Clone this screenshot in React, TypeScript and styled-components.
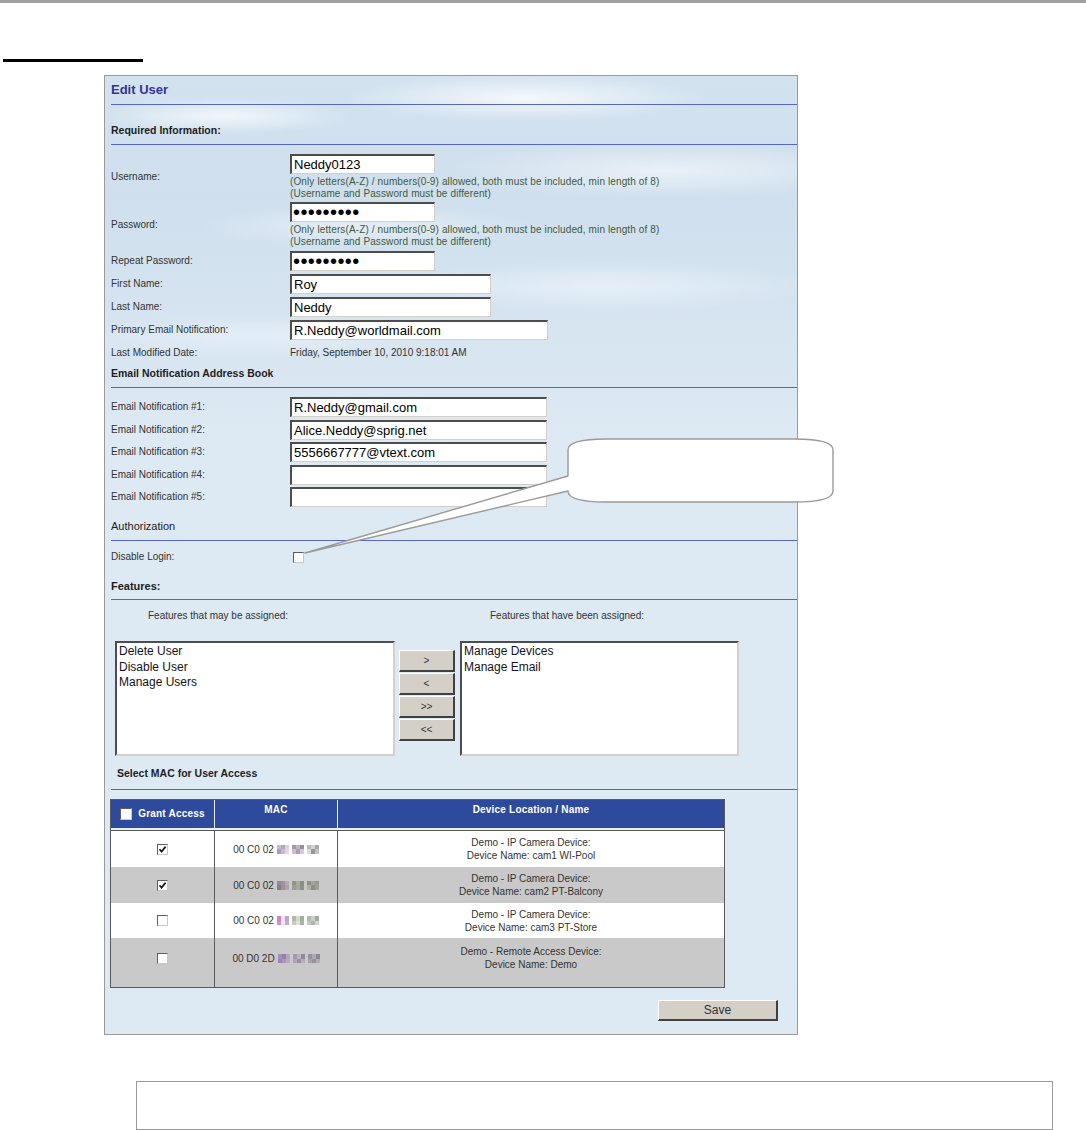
import styled, { createGlobalStyle } from "styled-components";

const GlobalStyle = createGlobalStyle`
  body {
    margin: 0;
    background: #fff;
    font-family: "Liberation Sans", Arial, sans-serif;
  }
`;

const macRows = [
  {
    checked: true,
    prefix: "00 C0 02",
    blur: [
      ["#c9b7cf", "#b3abbd", "#ddd1e0", "#a99fb3", "#c6bccd", "#e2d7e4"],
      ["#a598ab", "#c2b2c3", "#958da0", "#cbbfcd", "#ab9fb0", "#d6cad8"],
      ["#b8c0b5", "#d2d4d0", "#a5aca4", "#dcdadd", "#959a94", "#c4c2c6"],
    ],
    line1: "Demo - IP Camera Device:",
    line2: "Device Name: cam1 WI-Pool",
    bg: "#fff",
    h: 36,
  },
  {
    checked: true,
    prefix: "00 C0 02",
    blur: [
      ["#8f8a90", "#a98ca6", "#b6aab3", "#878083", "#9b9399", "#ada4aa"],
      ["#8c977f", "#a6aa9f", "#86907c", "#98a090", "#a8a6a3", "#8a9485"],
      ["#89937f", "#a4a3a0", "#959a8f", "#b2acae", "#899085", "#a09f9b"],
    ],
    line1: "Demo - IP Camera Device:",
    line2: "Device Name: cam2 PT-Balcony",
    bg: "#c9c9c9",
    h: 36,
  },
  {
    checked: false,
    prefix: "00 C0 02",
    blur: [
      ["#d282cc", "#ebe5eb", "#bda6cf", "#d690d2", "#efe9ef", "#c0aad2"],
      ["#b2bba8", "#d3dacb", "#a4ae9c", "#c5cdbd", "#dde1d8", "#aab4a3"],
      ["#b0b9b0", "#cdd0ce", "#a1aa9f", "#c5c8c5", "#aeb3ad", "#d4d6d4"],
    ],
    line1: "Demo - IP Camera Device:",
    line2: "Device Name: cam3 PT-Store",
    bg: "#fff",
    h: 35,
  },
  {
    checked: false,
    prefix: "00 D0 2D",
    blur: [
      ["#a98ebb", "#9580a8", "#b6a4c0", "#9b85ad", "#aa97b6", "#bcaac3"],
      ["#a09ca9", "#bab2bd", "#8d8b95", "#aea7b1", "#97949d", "#b6afb8"],
      ["#98949f", "#b0a9b4", "#8a8794", "#a6a0ae", "#96919e", "#b2abb6"],
    ],
    line1: "Demo - Remote Access Device:",
    line2: "Device Name: Demo",
    bg: "#c9c9c9",
    h: 49,
  },
];

const Page = styled.div`
  position: relative;
  width: 1086px;
  height: 1130px;
  overflow: hidden;
`;

const TopRule = styled.div`
  height: 3px;
  background: #a0a0a0;
`;

const HeadingRule = styled.div`
  margin: 56px 0 0 3px;
  width: 140px;
  height: 3px;
  background: #000;
`;

const Panel = styled.div`
  box-sizing: border-box;
  margin: 13px 0 0 104px;
  width: 694px;
  height: 960px;
  border: 1px solid #9a9a9a;
  padding: 0 0 0 6px;
  color: #333;
  background:
    radial-gradient(ellipse 260px 34px at 420px 22px, rgba(255, 255, 255, 0.75), rgba(255, 255, 255, 0) 70%),
    radial-gradient(ellipse 180px 26px at 120px 40px, rgba(255, 255, 255, 0.7), rgba(255, 255, 255, 0) 70%),
    radial-gradient(ellipse 320px 40px at 560px 95px, rgba(255, 255, 255, 0.55), rgba(255, 255, 255, 0) 70%),
    radial-gradient(ellipse 240px 30px at 260px 150px, rgba(255, 255, 255, 0.45), rgba(255, 255, 255, 0) 70%),
    radial-gradient(ellipse 300px 36px at 500px 210px, rgba(255, 255, 255, 0.45), rgba(255, 255, 255, 0) 70%),
    radial-gradient(ellipse 260px 30px at 150px 260px, rgba(255, 255, 255, 0.35), rgba(255, 255, 255, 0) 70%),
    linear-gradient(180deg, #d2e2ef 0px, #cfdfed 120px, #d7e5f1 260px, #dde9f3 360px, #dde9f3 100%);
`;

const PanelTitle = styled.div`
  padding: 7px 0 8px;
  line-height: 13px;
  font-size: 13px;
  font-weight: bold;
  color: #333399;
  border-bottom: 1px solid #5566c4;
`;

const SectionHead = styled.div<{ $top: number; $bottom?: number; $size?: number; $bold?: boolean; $indent?: number }>`
  margin-top: ${(p) => p.$top}px;
  padding: 0 0 ${(p) => p.$bottom ?? 8}px ${(p) => p.$indent ?? 0}px;
  line-height: 12px;
  font-size: ${(p) => p.$size ?? 10.5}px;
  font-weight: ${(p) => (p.$bold === false ? "normal" : "bold")};
  color: #1e1e1e;
  border-bottom: 1px solid #5566c4;
`;

const FieldList = styled.div<{ $top: number }>`
  margin-top: ${(p) => p.$top}px;
`;

const FieldRow = styled.div<{ $h?: number }>`
  display: grid;
  grid-template-columns: 179px 1fr;
  align-items: center;
  box-sizing: border-box;
  min-height: ${(p) => (p.$h ? `${p.$h}px` : "auto")};
  padding: ${(p) => (p.$h ? "0" : "1px 0")};
`;

const Label = styled.div`
  font-size: 10px;
  line-height: 12px;
  color: #333;
`;

const FieldCell = styled.div`
  display: flex;
  flex-direction: column;
  align-items: flex-start;
`;

const TextBox = styled.input<{ $w: number }>`
  box-sizing: border-box;
  width: ${(p) => p.$w}px;
  height: 20px;
  margin: 0;
  padding: 0 2px;
  border-style: solid;
  border-width: 2px 1px 1px 2px;
  border-color: #4d4d4d #d4d0c8 #d4d0c8 #4d4d4d;
  background: #fff;
  font-family: "Liberation Sans", Arial, sans-serif;
  font-size: 13px;
  color: #000;
  outline: none;
`;

const PasswordBox = styled(TextBox)`
  font-size: 20px;
  letter-spacing: 0.4px;
  padding-left: 1px;
`;

const Hint = styled.div`
  margin-top: 2px;
  font-size: 10px;
  line-height: 12px;
  letter-spacing: 0.12px;
  color: #3f5a3f;
`;

const HintLine = styled.div``;

const Value = styled.div`
  font-size: 10px;
  color: #333;
`;

const Box = styled.span<{ $size?: number; $inset?: number }>`
  display: inline-flex;
  align-items: center;
  justify-content: center;
  box-sizing: border-box;
  width: ${(p) => p.$size ?? 11}px;
  height: ${(p) => p.$size ?? 11}px;
  margin-left: ${(p) => p.$inset ?? 0}px;
  background: #fff;
  border-style: solid;
  border-width: 1px;
  border-color: #5e5e5e #c8c8c8 #c8c8c8 #5e5e5e;
  flex: none;
`;

const CheckBox = ({ checked, size, inset }: { checked?: boolean; size?: number; inset?: number }) => (
  <Box $size={size} $inset={inset}>
    {checked && (
      <svg width="9" height="9" viewBox="0 0 9 9">
        <path d="M1.5 4.2 L3.6 6.6 L7.6 1.6" fill="none" stroke="#1a1a1a" strokeWidth="1.7" />
      </svg>
    )}
  </Box>
);

const FeatureGrid = styled.div`
  display: grid;
  grid-template-columns: 280px 56px 280px;
  column-gap: 4px;
  margin-top: 10px;
  padding-left: 4px;
  & > :nth-child(3n) {
    margin-left: 1px;
  }
`;

const SubHead = styled.div<{ $pad: number }>`
  padding-left: ${(p) => p.$pad}px;
  font-size: 10px;
  line-height: 12px;
  color: #333;
`;

const Spacer = styled.div``;

const ListBox = styled.div`
  box-sizing: border-box;
  margin-top: 19px;
  height: 115px;
  padding: 1px 2px;
  background: #fff;
  border-style: solid;
  border-width: 2px 2px 2px 2px;
  border-color: #4d4d4d #d4d0c8 #d4d0c8 #4d4d4d;
`;

const ListItem = styled.div`
  font-size: 12px;
  line-height: 15.5px;
  color: #151020;
`;

const MoveButtons = styled.div`
  display: flex;
  flex-direction: column;
  gap: 1px;
  margin-top: 28px;
`;

const ClassicButton = styled.button<{ $w?: number; $h?: number; $size?: number }>`
  box-sizing: border-box;
  width: ${(p) => (p.$w ? `${p.$w}px` : "100%")};
  height: ${(p) => p.$h ?? 22}px;
  margin: 0;
  padding: 0;
  background: #d4d0c8;
  border-style: solid;
  border-width: 1px 2px 2px 1px;
  border-color: #ffffff #404040 #404040 #ffffff;
  font-family: "Liberation Sans", Arial, sans-serif;
  font-size: ${(p) => p.$size ?? 10}px;
  color: #333;
  cursor: pointer;
`;

const DeviceTable = styled.div`
  box-sizing: border-box;
  width: 615px;
  margin: 9px 0 0 -1px;
  border: 1px solid #5a5a5a;
`;

const HeaderRow = styled.div`
  display: grid;
  grid-template-columns: 104px 123px 1fr;
  border-bottom: 2px solid #e6eef5;
`;

const HeadCell = styled.div<{ $center?: boolean }>`
  box-sizing: border-box;
  height: 28px;
  display: flex;
  justify-content: center;
  align-items: ${(p) => (p.$center ? "center" : "flex-start")};
  gap: 6px;
  padding-top: ${(p) => (p.$center ? 0 : 4)}px;
  background: #2e4a9c;
  border-right: 1px solid #e6eef5;
  font-size: 10px;
  line-height: 12px;
  font-weight: bold;
  letter-spacing: 0.2px;
  color: #fff;
  &:last-child {
    border-right: none;
  }
`;

const BodyRow = styled.div<{ $bg: string; $h: number; $first?: boolean }>`
  display: grid;
  grid-template-columns: 104px 123px 1fr;
  height: ${(p) => p.$h + (p.$first ? 1 : 0)}px;
  box-sizing: border-box;
  border-top: ${(p) => (p.$first ? "1px solid #5a5a5a" : "none")};
  background: ${(p) => p.$bg};
`;

const BodyCell = styled.div<{ $pb?: number }>`
  display: flex;
  flex-direction: column;
  justify-content: center;
  align-items: center;
  padding-bottom: ${(p) => p.$pb ?? 0}px;
  border-right: 1px solid #5a5a5a;
  font-size: 10px;
  line-height: 13px;
  color: #333;
  text-align: center;
  &:last-child {
    border-right: none;
  }
`;

const MacText = styled.div`
  display: flex;
  align-items: center;
`;

const BlurBlock = styled.span`
  display: inline-grid;
  grid-template-columns: repeat(3, 4px);
  grid-auto-rows: 4.5px;
  margin-left: 3px;
`;

const BlurCell = styled.span<{ $c: string }>`
  background: ${(p) => p.$c};
`;

const SaveBar = styled.div`
  display: flex;
  justify-content: flex-end;
  margin-top: 12px;
  padding-right: 19px;
`;

const Callout = styled.svg`
  position: absolute;
  left: 300px;
  top: 432px;
  pointer-events: none;
`;

const NoteBox = styled.div`
  box-sizing: border-box;
  margin: 46px 0 0 136px;
  width: 917px;
  height: 49px;
  border: 1px solid #9a9a9a;
`;

const Blur = ({ blocks }: { blocks: string[][] }) => (
  <>
    {blocks.map((cells, i) => (
      <BlurBlock key={i}>
        {cells.map((c, j) => (
          <BlurCell key={j} $c={c} />
        ))}
      </BlurBlock>
    ))}
  </>
);

const emails = ["R.Neddy@gmail.com", "Alice.Neddy@sprig.net", "5556667777@vtext.com", "", ""];

export default function App() {
  return (
    <Page>
      <GlobalStyle />
      <TopRule />
      <HeadingRule />
      <Panel>
        <PanelTitle>Edit User</PanelTitle>
        <SectionHead $top={19}>Required Information:</SectionHead>

        <FieldList $top={8}>
          <FieldRow>
            <Label>Username:</Label>
            <FieldCell>
              <TextBox $w={145} defaultValue="Neddy0123" />
              <Hint>
                <HintLine>(Only letters(A-Z) / numbers(0-9) allowed, both must be included, min length of 8)</HintLine>
                <HintLine>(Username and Password must be different)</HintLine>
              </Hint>
            </FieldCell>
          </FieldRow>
          <FieldRow>
            <Label>Password:</Label>
            <FieldCell>
              <PasswordBox $w={145} type="password" defaultValue="neddy0123" />
              <Hint>
                <HintLine>(Only letters(A-Z) / numbers(0-9) allowed, both must be included, min length of 8)</HintLine>
                <HintLine>(Username and Password must be different)</HintLine>
              </Hint>
            </FieldCell>
          </FieldRow>
          <FieldRow $h={23}>
            <Label>Repeat Password:</Label>
            <FieldCell>
              <PasswordBox $w={145} type="password" defaultValue="neddy0123" />
            </FieldCell>
          </FieldRow>
          <FieldRow $h={23}>
            <Label>First Name:</Label>
            <FieldCell>
              <TextBox $w={201} defaultValue="Roy" />
            </FieldCell>
          </FieldRow>
          <FieldRow $h={23}>
            <Label>Last Name:</Label>
            <FieldCell>
              <TextBox $w={201} defaultValue="Neddy" />
            </FieldCell>
          </FieldRow>
          <FieldRow $h={23}>
            <Label>Primary Email Notification:</Label>
            <FieldCell>
              <TextBox $w={258} defaultValue="R.Neddy@worldmail.com" />
            </FieldCell>
          </FieldRow>
          <FieldRow $h={23}>
            <Label>Last Modified Date:</Label>
            <Value>Friday, September 10, 2010 9:18:01 AM</Value>
          </FieldRow>
        </FieldList>

        <SectionHead $top={3}>Email Notification Address Book</SectionHead>
        <FieldList $top={8}>
          {emails.map((e, i) => (
            <FieldRow key={i} $h={22.5}>
              <Label>Email Notification #{i + 1}:</Label>
              <FieldCell>
                <TextBox $w={257} defaultValue={e} />
              </FieldCell>
            </FieldRow>
          ))}
        </FieldList>

        <SectionHead $top={11.5} $size={11} $bold={false}>
          Authorization
        </SectionHead>
        <FieldList $top={5}>
          <FieldRow $h={22}>
            <Label>Disable Login:</Label>
            <FieldCell>
              <CheckBox inset={3} />
            </FieldCell>
          </FieldRow>
        </FieldList>

        <SectionHead $top={12} $size={11} $bottom={7}>
          Features:
        </SectionHead>
        <FeatureGrid>
          <SubHead $pad={33}>Features that may be assigned:</SubHead>
          <Spacer />
          <SubHead $pad={30}>Features that have been assigned:</SubHead>
          <ListBox>
            <ListItem>Delete User</ListItem>
            <ListItem>Disable User</ListItem>
            <ListItem>Manage Users</ListItem>
          </ListBox>
          <MoveButtons>
            <ClassicButton>&gt;</ClassicButton>
            <ClassicButton>&lt;</ClassicButton>
            <ClassicButton>&gt;&gt;</ClassicButton>
            <ClassicButton>&lt;&lt;</ClassicButton>
          </MoveButtons>
          <ListBox>
            <ListItem>Manage Devices</ListItem>
            <ListItem>Manage Email</ListItem>
          </ListBox>
        </FeatureGrid>

        <SectionHead $top={11} $bottom={10} $indent={6}>
          Select MAC for User Access
        </SectionHead>
        <DeviceTable>
          <HeaderRow>
            <HeadCell $center>
              <CheckBox size={12} />
              Grant Access
            </HeadCell>
            <HeadCell>MAC</HeadCell>
            <HeadCell>Device Location / Name</HeadCell>
          </HeaderRow>
          {macRows.map((r, i) => (
            <BodyRow key={i} $bg={r.bg} $h={r.h} $first={i === 0}>
              <BodyCell $pb={i === 3 ? 8 : 0}>
                <CheckBox checked={r.checked} />
              </BodyCell>
              <BodyCell $pb={i === 3 ? 8 : 0}>
                <MacText>
                  {r.prefix}
                  <Blur blocks={r.blur} />
                </MacText>
              </BodyCell>
              <BodyCell $pb={i === 3 ? 9 : 0}>
                <div>{r.line1}</div>
                <div>{r.line2}</div>
              </BodyCell>
            </BodyRow>
          ))}
        </DeviceTable>

        <SaveBar>
          <ClassicButton $w={120} $h={21} $size={12}>
            Save
          </ClassicButton>
        </SaveBar>
      </Panel>
      <NoteBox />

      <Callout width="540" height="130" viewBox="300 432 540 130">
        <path
          d="M568 476 L305 553 L568 491 L568 491 Q568 502 606 502 L795 502 Q833 502 833 491 L833 450 Q833 439 795 439 L606 439 Q568 439 568 450 Z"
          fill="#fff"
          stroke="#9a9a9a"
          strokeWidth="1.4"
          strokeLinejoin="round"
        />
      </Callout>
    </Page>
  );
}
